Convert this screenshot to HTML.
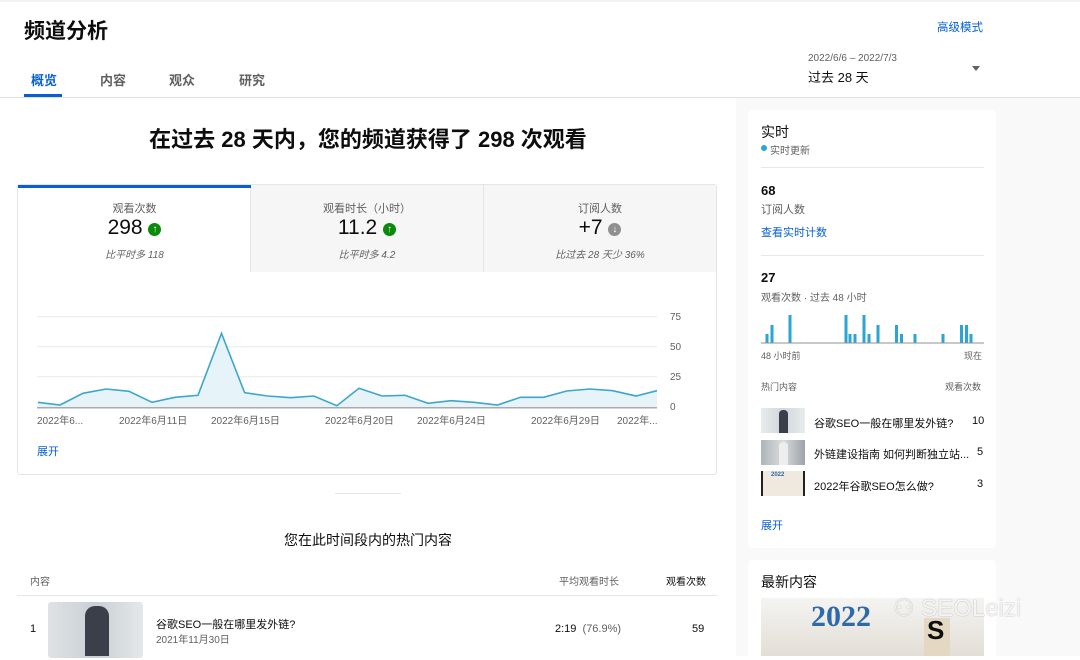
<!DOCTYPE html>
<html><head><meta charset="utf-8"><style>
*{box-sizing:border-box;margin:0;padding:0}
body{width:1080px;height:656px;overflow:hidden;background:#fff;font-family:"Liberation Sans","Noto Sans CJK SC",sans-serif;color:#0d0d0d;position:relative}
.a{position:absolute;white-space:nowrap}
.g{color:#606060}
.blue{color:#065fd4}
</style></head><body>
<div class="a" style="left:0;top:0;width:1080px;height:2px;background:#f2f2f2"></div>
<div class="a" style="left:24px;top:15px;font-size:21px;font-weight:bold">频道分析</div>
<div class="a blue" style="left:937px;top:19px;font-size:11.5px">高级模式</div>
<div class="a blue" style="left:31px;top:70px;font-size:13px;font-weight:bold">概览</div>
<div class="a" style="left:24px;top:94px;width:38px;height:3px;background:#065fd4"></div>
<div class="a g" style="left:100px;top:70px;font-size:13px;font-weight:bold">内容</div>
<div class="a g" style="left:169px;top:70px;font-size:13px;font-weight:bold">观众</div>
<div class="a g" style="left:239px;top:70px;font-size:13px;font-weight:bold">研究</div>
<div class="a g" style="left:808px;top:53px;font-size:10px">2022/6/6 – 2022/7/3</div>
<div class="a" style="left:808px;top:67px;font-size:13px">过去 28 天</div>
<div class="a" style="left:972px;top:66px;width:0;height:0;border-left:4px solid transparent;border-right:4px solid transparent;border-top:5px solid #606060"></div>
<div class="a" style="left:0;top:97px;width:1080px;height:1px;background:#e0e0e0"></div>
<div class="a" style="left:736px;top:98px;width:344px;height:558px;background:#f9f9f9"></div>

<div class="a" style="left:0;top:122px;width:736px;text-align:center;font-size:22px;font-weight:bold">在过去 28 天内，您的频道获得了 298 次观看</div>

<div class="a" style="left:17px;top:184px;width:700px;height:291px;border:1px solid #e5e5e5;border-radius:3px"></div>
<div class="a" style="left:251px;top:185px;width:465px;height:87px;background:#f6f6f6"></div>
<div class="a" style="left:483px;top:185px;width:1px;height:87px;background:#e5e5e5"></div>
<div class="a" style="left:250px;top:185px;width:1px;height:87px;background:#e5e5e5"></div>
<div class="a" style="left:18px;top:185px;width:233px;height:3px;background:#065fd4"></div>

<div class="a g" style="left:18px;top:200px;width:233px;text-align:center;font-size:11px">观看次数</div>
<div class="a" style="left:18px;top:216px;width:233px;text-align:center;font-size:21px">298 <span style="display:inline-block;width:13px;height:13px;border-radius:50%;background:#0a8a0a;color:#fff;font-size:10px;line-height:13px;vertical-align:2px;font-weight:bold">↑</span></div>
<div class="a g" style="left:18px;top:246px;width:233px;text-align:center;font-size:10px;font-style:italic">比平时多 118</div>
<div class="a g" style="left:251px;top:200px;width:232px;text-align:center;font-size:11px">观看时长（小时）</div>
<div class="a" style="left:251px;top:216px;width:232px;text-align:center;font-size:21px">11.2 <span style="display:inline-block;width:13px;height:13px;border-radius:50%;background:#0a8a0a;color:#fff;font-size:10px;line-height:13px;vertical-align:2px;font-weight:bold">↑</span></div>
<div class="a g" style="left:251px;top:246px;width:232px;text-align:center;font-size:10px;font-style:italic">比平时多 4.2</div>
<div class="a g" style="left:484px;top:200px;width:232px;text-align:center;font-size:11px">订阅人数</div>
<div class="a" style="left:484px;top:216px;width:232px;text-align:center;font-size:21px">+7 <span style="display:inline-block;width:13px;height:13px;border-radius:50%;background:#909090;color:#fff;font-size:10px;line-height:13px;vertical-align:2px;font-weight:bold">↓</span></div>
<div class="a g" style="left:484px;top:246px;width:232px;text-align:center;font-size:10px;font-style:italic">比过去 28 天少 36%</div>

<svg class="a" style="left:0;top:300px" width="720" height="130">
<g stroke="#e8e8e8" stroke-width="1"><line x1="37" y1="16.7" x2="657" y2="16.7"/><line x1="37" y1="46.7" x2="657" y2="46.7"/><line x1="37" y1="76.7" x2="657" y2="76.7"/></g>
<polygon fill="#e6f3f9" points="37.8,102.3 60,105 83,93.3 106,89 129,91.3 152,102.3 175,97.3 198,95.3 221.5,33.3 244.6,92.7 267.6,96 290.7,97.7 313.8,96 336.9,105.7 359,88.3 382,96 405,95.3 428,103.3 451,100.7 474,102.3 497.5,105 520.5,97.3 543.6,97.3 566.7,91 589.8,89 612.8,90.7 636,96 657,90.7 657,107.7 37.8,107.7"/>
<polyline fill="none" stroke="#3ea6cc" stroke-width="1.6" points="37.8,102.3 60,105 83,93.3 106,89 129,91.3 152,102.3 175,97.3 198,95.3 221.5,33.3 244.6,92.7 267.6,96 290.7,97.7 313.8,96 336.9,105.7 359,88.3 382,96 405,95.3 428,103.3 451,100.7 474,102.3 497.5,105 520.5,97.3 543.6,97.3 566.7,91 589.8,89 612.8,90.7 636,96 657,90.7"/>
<line x1="37" y1="107.7" x2="657" y2="107.7" stroke="#aaa" stroke-width="1.5"/>
<g fill="#606060" font-size="10" font-family="Liberation Sans,Noto Sans CJK SC,sans-serif">
<text x="670" y="20">75</text><text x="670" y="50">50</text><text x="670" y="80">25</text><text x="670" y="110">0</text>
<text x="37" y="124">2022年6...</text><text x="119" y="124">2022年6月11日</text><text x="211" y="124">2022年6月15日</text><text x="325" y="124">2022年6月20日</text><text x="417" y="124">2022年6月24日</text><text x="531" y="124">2022年6月29日</text><text x="617" y="124">2022年...</text>
</g></svg>
<div class="a blue" style="left:37px;top:443px;font-size:11px">展开</div>

<div class="a" style="left:335px;top:493px;width:66px;height:1px;background:#e5e5e5"></div>
<div class="a" style="left:0;top:530px;width:736px;text-align:center;font-size:14px">您在此时间段内的热门内容</div>
<div class="a g" style="left:30px;top:573px;font-size:10px">内容</div>
<div class="a g" style="left:559px;top:573px;font-size:10px">平均观看时长</div>
<div class="a" style="left:666px;top:573px;font-size:10px">观看次数</div>
<div class="a" style="left:17px;top:595px;width:700px;height:1px;background:#e5e5e5"></div>
<div class="a" style="left:30px;top:623px;font-size:11px">1</div>
<div class="a" style="left:48px;top:602px;width:95px;height:56px;border-radius:3px;background:linear-gradient(90deg,#dfe3e6,#c9cfd4 50%,#e5e8ea)"></div>
<div class="a" style="left:85px;top:606px;width:24px;height:50px;border-radius:10px 10px 0 0;background:#3b3f4a"></div>
<div class="a" style="left:156px;top:616px;font-size:11px">谷歌SEO一般在哪里发外链?</div>
<div class="a g" style="left:156px;top:631px;font-size:10px">2021年11月30日</div>
<div class="a" style="left:555px;top:623px;font-size:11px">2:19 <span class="g">&nbsp;(76.9%)</span></div>
<div class="a" style="left:692px;top:623px;font-size:11px">59</div>

<div class="a" style="left:748px;top:110px;width:248px;height:438px;background:#fff;border-radius:4px"></div>
<div class="a" style="left:761px;top:122px;font-size:14px">实时</div>
<div class="a" style="left:761px;top:145px;width:6px;height:6px;border-radius:50%;background:#2ba5d1"></div>
<div class="a g" style="left:770px;top:142px;font-size:10px">实时更新</div>
<div class="a" style="left:761px;top:167px;width:223px;height:1px;background:#e8e8e8"></div>
<div class="a" style="left:761px;top:183px;font-size:13px;font-weight:bold">68</div>
<div class="a g" style="left:761px;top:201px;font-size:11px">订阅人数</div>
<div class="a blue" style="left:761px;top:224px;font-size:11px">查看实时计数</div>
<div class="a" style="left:761px;top:255px;width:223px;height:1px;background:#e8e8e8"></div>
<div class="a" style="left:761px;top:270px;font-size:13px;font-weight:bold">27</div>
<div class="a g" style="left:761px;top:289px;font-size:10px">观看次数 · 过去 48 小时</div>
<svg class="a" style="left:740px;top:310px" width="260" height="40">
<g fill="#2ba5d1">
<rect x="25.5" y="24" width="3" height="9"/>
<rect x="30.5" y="15" width="3" height="18"/>
<rect x="48.5" y="5" width="3" height="28"/>
<rect x="104.5" y="5" width="3" height="28"/>
<rect x="108.5" y="24" width="3" height="9"/>
<rect x="113.5" y="24" width="3" height="9"/>
<rect x="122.5" y="5" width="3" height="28"/>
<rect x="127.5" y="24" width="3" height="9"/>
<rect x="136.5" y="15" width="3" height="18"/>
<rect x="155" y="15" width="3" height="18"/>
<rect x="160" y="24" width="3" height="9"/>
<rect x="173.5" y="24" width="3" height="9"/>
<rect x="201.5" y="24" width="3" height="9"/>
<rect x="220" y="15" width="3" height="18"/>
<rect x="225" y="15" width="3" height="18"/>
<rect x="229.5" y="24" width="3" height="9"/>
</g>
<line x1="21" y1="33" x2="244" y2="33" stroke="#909090" stroke-width="1"/>
</svg>
<div class="a g" style="left:761px;top:349px;font-size:9px">48 小时前</div>
<div class="a g" style="left:964px;top:349px;font-size:9px">现在</div>
<div class="a g" style="left:761px;top:380px;font-size:9px">热门内容</div>
<div class="a g" style="left:945px;top:380px;font-size:9px">观看次数</div>

<div class="a" style="left:761px;top:408px;width:44px;height:25px;background:linear-gradient(90deg,#e8ecee,#d0d6da 50%,#e8ecee)"></div>
<div class="a" style="left:779px;top:410px;width:9px;height:23px;border-radius:4px 4px 0 0;background:#3b3f4a"></div>
<div class="a" style="left:814px;top:415px;font-size:11px">谷歌SEO一般在哪里发外链?</div>
<div class="a" style="left:972px;top:415px;font-size:11px">10</div>
<div class="a" style="left:761px;top:440px;width:44px;height:25px;background:linear-gradient(90deg,#aeb4b8,#d8dcde 50%,#9da3a8)"></div>
<div class="a" style="left:779px;top:442px;width:9px;height:23px;border-radius:4px 4px 0 0;background:#eee"></div>
<div class="a" style="left:814px;top:446px;font-size:11px">外链建设指南 如何判断独立站...</div>
<div class="a" style="left:977px;top:446px;font-size:11px">5</div>
<div class="a" style="left:761px;top:471px;width:44px;height:25px;background:#efe9df;border-left:2px solid #222;border-right:2px solid #222"></div>
<div class="a" style="left:771px;top:472px;font-size:6px;color:#2e67a6;font-weight:bold">2022</div>
<div class="a" style="left:814px;top:478px;font-size:11px">2022年谷歌SEO怎么做?</div>
<div class="a" style="left:977px;top:478px;font-size:11px">3</div>
<div class="a blue" style="left:761px;top:517px;font-size:11px">展开</div>

<div class="a" style="left:748px;top:560px;width:248px;height:100px;background:#fff;border-radius:4px"></div>
<div class="a" style="left:761px;top:572px;font-size:14px">最新内容</div>
<div class="a" style="left:761px;top:598px;width:223px;height:58px;background:linear-gradient(180deg,#f4f4f2,#e3ded6)"></div>
<div class="a" style="left:811px;top:600px;font-size:30px;font-weight:bold;color:#2f6aa8;font-family:'Liberation Serif',serif">2022</div>
<div class="a" style="left:924px;top:618px;width:26px;height:38px;background:#e5d8c2"></div>
<div class="a" style="left:927px;top:615px;font-size:26px;font-weight:bold">S</div>
<div class="a" style="left:893px;top:594px;font-size:24px;color:rgba(255,255,255,0.9);text-shadow:0 0 1px #888">⚇ SEOLeizi</div>
</body></html>
